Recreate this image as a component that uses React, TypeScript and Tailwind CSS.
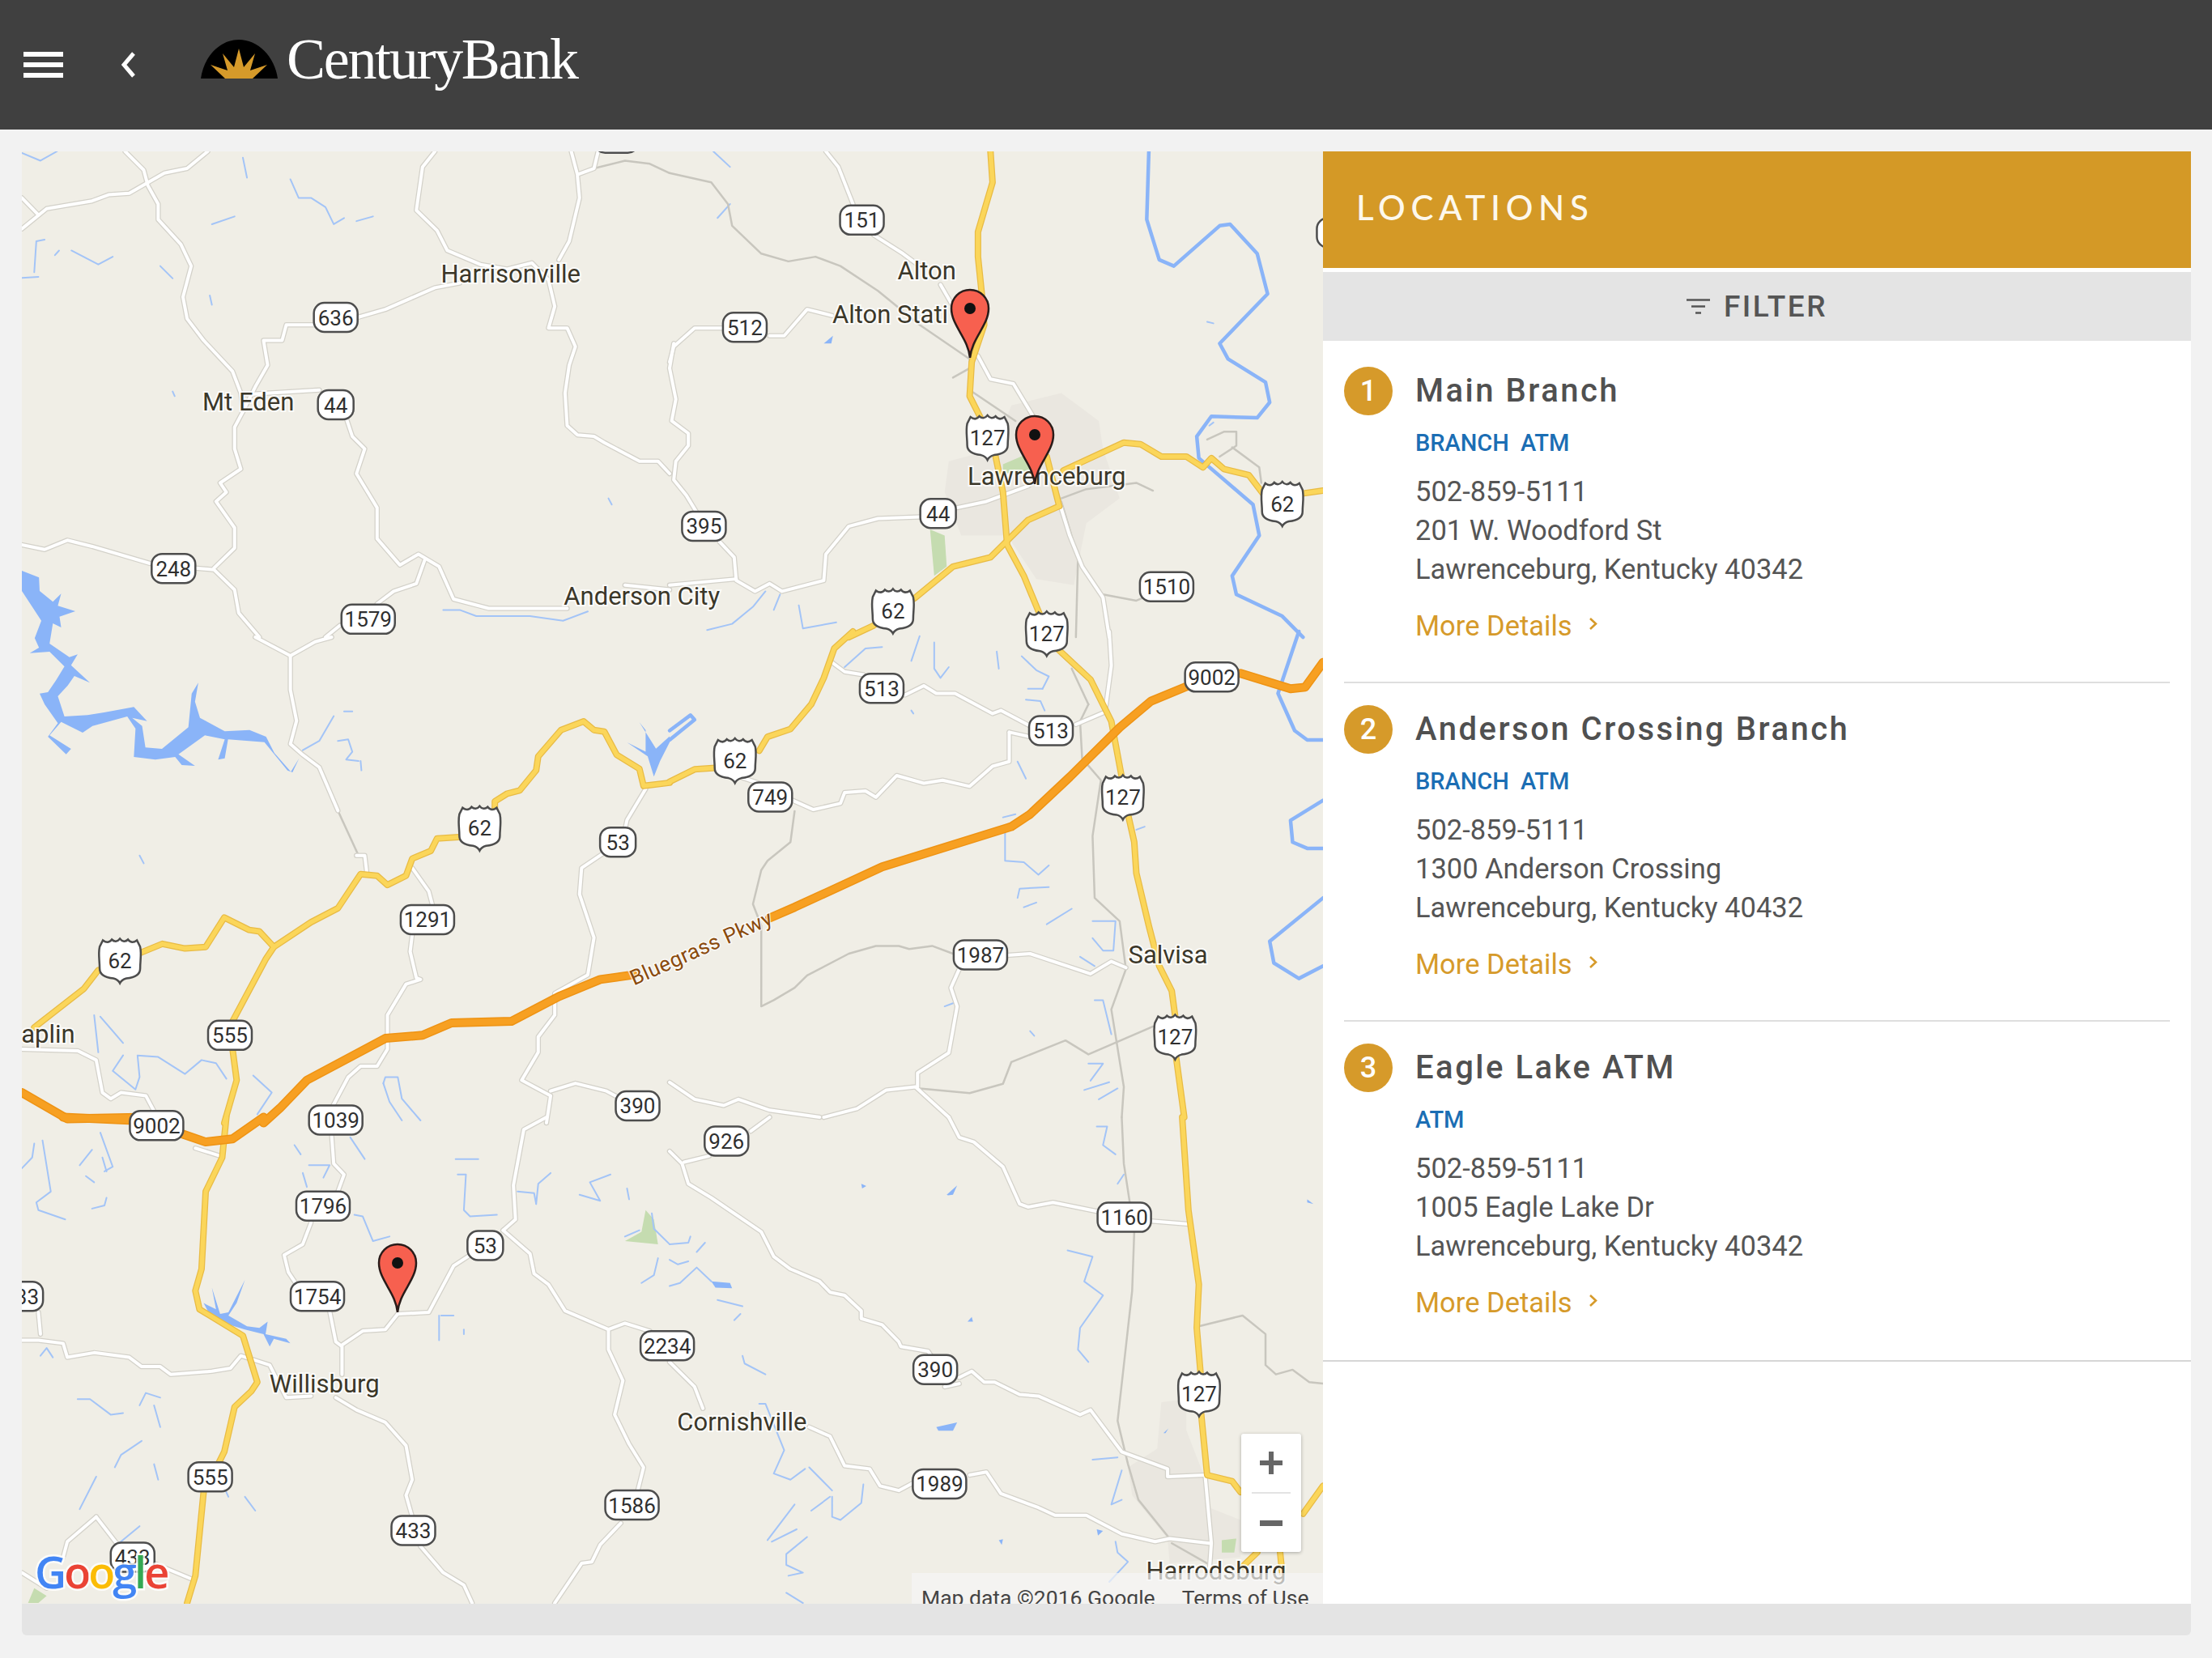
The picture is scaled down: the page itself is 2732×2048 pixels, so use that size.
type Tile = {
    at: string
    town?: string[]
    park?: string[]
    lake?: string[]
    water?: string[]
    river?: string[]
    thin?: string[]
    white?: string[]
    yellow?: string[]
    orange?: string[]
}

// road and water traces, each tile in its own source coordinates
const tiles: Tile[] = [
    {
        at: 'translate(0 680) scale(.4082 .3333)',
        lake: [
            '66,75 118,100 120,150 160,190 185,160 175,205 228,225 180,245 185,285 160,270 150,345 210,395 235,385 215,425 272,490 225,465 205,500 175,540 195,615 265,610 315,600 405,580 445,632 400,620 430,650 440,730 490,735 570,655 580,530 600,490 590,560 605,620 680,670 755,665 805,690 830,750 880,820 905,770 885,822 870,815 800,710 690,700 680,770 660,775 680,700 620,685 540,755 590,798 550,795 530,765 470,775 405,765 410,660 385,615 280,650 250,675 185,635 150,685 215,735 200,755 145,690 175,640 135,570 120,530 145,525 170,480 195,430 150,375 90,380 118,360 105,325 125,260 66,150',
        ],
    },
    {
        at: 'translate(27 187) scale(.5102 .3827)',
        water: [
            '535,20 545,85', '650,90 670,150 700,150 735,180 755,235 780,215', '810,225 850,210', '460,235 515,210',
            '0,5 45,30 85,0', '30,390 35,290 55,285', '80,335 90,320', '120,320 185,365 220,340', '335,370 365,410',
            '455,465 460,495', '0,408 40,405', '365,775 370,790', '1420,1120 1428,1140',
            '1020,1480 1060,1480 1100,1500 1230,1500 1310,1515 1370,1485',
        ],
        thin: ['1385,55 1460,30 1520,40 1568,70'],
        white: [
            '250,0 295,60 305,110 330,170 330,220 385,300 410,370 390,470 400,540 440,610 510,710 530,780 535,840 515,890 515,960 530,1025 480,1070 495,1100 470,1130 515,1215 515,1280 465,1345',
            '0,250 60,185 170,160 210,140 260,135 345,70 400,55 450,0',
            '0,150 40,205',
            '1000,0 970,50 955,190 1005,255 1030,320 1110,365 1175,380 1235,360 1275,415 1290,500 1275,570 1320,570 1340,630 1325,690 1315,780 1320,885 1345,915 1385,920 1410,940 1495,1000 1540,1000 1568,1040',
            '1345,80 1350,150 1325,290 1300,350',
            '1330,0 1345,75 1385,55 1395,0',
            '1060,425 1000,440 880,510 815,535',
            '720,560 640,560 630,610 585,610 595,690 565,760 535,840',
            '535,785 720,770',
            '785,860 800,920 830,960 810,1040 860,1150 860,1250 915,1335 960,1300 1010,1340 1045,1445 1130,1475 1320,1475',
            '1460,1400 1568,1415',
            '975,1320 955,1395 900,1420 860,1460',
            '0,1270 55,1285 110,1255 170,1275 310,1330',
            '420,1345 465,1350 515,1415 525,1490 575,1568',
            '770,1530 735,1568',
        ],
    },
    {
        at: 'translate(827 187) scale(.5147 .3827)',
        town: ['670,1000 780,960 820,820 940,780 1030,870 1040,960 1080,1120 1000,1200 970,1400 880,1380 810,1240 700,1240 660,1100'],
        park: ['800,1010 860,975 870,1030 800,1040', '625,1220 660,1240 665,1340 635,1370'],
        lake: ['370,620 392,595 388,620'],
        river: ['1150,0 1145,220 1175,350 1210,370 1320,240 1345,235 1410,330 1435,460 1320,620 1340,670 1430,745 1440,810 1410,860 1300,855 1265,920 1270,990 1400,1140 1415,1240 1350,1370 1360,1430 1470,1500 1520,1568'],
        water: ['105,0 145,50', '145,170 115,215', '1290,550 1305,555', '1295,885 1305,875', '250,1480 265,1430', '90,1545 150,1525 200,1470 230,1420', '310,1465 320,1540 400,1520'],
        thin: [
            '0,70 100,100 140,170 150,240 220,330 285,355 350,340 410,370 500,450 600,560 720,670 720,770 830,870',
            '720,700 680,730', '940,1120 1000,1090 1120,1070 1160,1095', '940,1130 980,1310 975,1568', '1040,1430 1120,1450 1190,1410',
            '1290,930 1330,905 1360,905 1360,950 1320,985', '1350,955 1415,1020 1420,1070',
        ],
        white: [
            '375,0 405,50 440,170', '490,270 560,330 600,370', '650,430 680,500',
            '0,680 10,630 60,570 130,570', '240,595 275,595 330,510 390,530',
            '10,620 0,700 15,800 5,870 45,910 45,950 15,1000 10,1060 40,1110 65,1165',
            '120,1260 155,1310 160,1385 205,1420 240,1395 270,1420 370,1385 375,1300 430,1210 500,1185 600,1180',
            '160,1380 0,1400', '690,1150 760,1130 860,1080 880,1060', '740,660 770,735 825,750 870,850',
            '900,980 960,1240 990,1340 1040,1440 1055,1568',
        ],
        yellow: [
            '770,0 775,100 740,260 740,340 750,470 755,560 725,680 720,790 750,870',
            '780,970 800,1100 810,1270 850,1370 890,1500', '905,985 935,1145',
            '430,1568 490,1530 590,1440 680,1340 770,1310 860,1190 935,1145',
            '945,1030 1090,940 1130,945 1180,985 1240,985 1280,1020 1300,990 1330,1025 1390,1045 1430,1115',
            '1515,1105 1568,1095',
        ],
    },
    {
        at: 'translate(27 787) scale(.5102 .3827)',
        lake: ['1495,275 1510,300 1510,370 1465,340 1515,385 1530,450 1545,400 1568,340 1568,320 1535,360'],
        water: [
            '755,255 720,335 680,365', '780,240 800,240', '765,335 790,330 800,370 785,395 815,400', '820,400 822,430', '285,705 295,730',
            '175,1220 185,1340', '190,1225 245,1310', '245,1350 220,1400 275,1460 285,1420 280,1350 330,1355 395,1410 435,1365 470,1375 495,1425',
            '560,1415 605,1470 570,1540', '875,1440 880,1420 910,1420 920,1490 965,1560', '875,1440 890,1500 920,1560',
        ],
        thin: ['765,560 815,705'],
        white: [
            '565,0 650,60 710,15 750,0', '650,60 650,170 665,270 650,345 680,380 720,420 765,560', '810,705 830,705 835,760',
            '945,745 985,820 995,870',
            '945,960 940,1015 955,1100 965,1105 930,1120 885,1220 885,1330 860,1385 820,1385 790,1420 750,1520',
            '1510,490 1465,590 1460,620',
            '1405,700 1355,745 1350,830 1385,970 1370,1090 1290,1150 1290,1220 1250,1290 1250,1340 1210,1430 1280,1480 1270,1568',
            '1280,1465 1340,1440 1415,1465 1450,1490',
            '0,1330 135,1335 180,1365 195,1470 215,1490 240,1470 300,1480 320,1530',
        ],
        yellow: [
            '1145,555 1145,530 1175,505 1205,495 1245,430 1250,385 1305,300 1360,272 1385,300 1410,305 1440,380 1495,425 1505,480 1568,470',
            '1065,645 1005,650 990,690 945,715 930,770 885,800 860,770 820,765 765,875 700,920 610,1000 590,1040 510,1240',
            '610,1000 575,950 550,945 490,905 445,1000 395,1005 340,990 285,1020',
            '185,1075 150,1135 30,1260', '510,1330 520,1430 490,1568',
        ],
        orange: [
            '0,1470 110,1555 280,1550',
            '585,1568 625,1520 690,1430 880,1295 970,1285 1040,1245 1185,1240 1300,1160 1400,1105 1480,1090',
        ],
    },
    {
        at: 'translate(827 780) scale(.5147 .3827)',
        river: [
            '1510,0 1460,200 1500,320 1530,350 1568,350', '1568,545 1490,610 1495,680 1530,700 1568,700',
            '1568,860 1440,1000 1450,1070 1510,1120 1568,1080', '0,350 60,285 50,270 0,320',
        ],
        water: [
            '800,600 830,590', '805,640 805,740 850,745 885,785 910,755', '835,860 840,830 910,825', '850,890 880,875', '905,945 965,895',
            '1015,935 1070,935 1065,1030 1040,1030 1015,990', '985,1050 1020,1080', '1020,1190 1040,1190 1060,1300',
            '1005,1395 1040,1395 1010,1450', '995,1480 1055,1455', '1030,1510 1075,1475', '865,1290 875,1305', '660,1210 680,1200',
            '785,65 790,120', '845,80 880,125 910,145 895,185', '860,185 895,185', '855,220 890,225 900,255', '835,420 855,475',
            '1120,640 1140,630', '420,115 470,55 510,50', '580,95 600,15', '635,35 635,120 650,150 670,115', '580,255 585,265',
        ],
        thin: [
            '300,580 290,680 235,740 220,770 200,880 220,950 220,1210 250,1190 300,1150 330,1110 430,1040 495,1015 550,1015 575,1025 630,1015 680,1040',
            '1005,235 985,290 990,410 1035,480 1015,660 1020,860 1080,935 1095,1090 1060,1220 1090,1470 1085,1568',
            '965,120 1005,235', '600,1475 720,1490 800,1460 820,1390 950,1320 1005,1365 1160,1275',
        ],
        white: [
            '385,95 420,130 465,140', '565,205 610,175 640,200 685,200 775,265 795,255 865,305', '975,300 1045,260 1060,110 1055,0',
            '815,325 865,340', '815,325 815,420 775,435 720,500 655,480 610,490 545,465 495,535 470,515 420,520 410,555 345,575 295,545',
            '170,470 215,490', '810,1045 865,1040 1010,1105 1060,1065 1095,1085', '695,1090 675,1150 690,1210 670,1360 595,1425 595,1470',
            '0,1455 60,1510 130,1530 165,1510 240,1545 360,1568', '370,1568 450,1540 520,1480 590,1470 670,1568',
        ],
        yellow: [
            '440,0 395,55 370,150 340,235 290,315 235,340 215,385', '110,440 60,445 0,485', '930,55 1010,155 1060,290 1085,470',
            '1100,590 1115,680 1120,780 1150,950 1175,1080 1205,1160 1215,1260', '1215,1370 1235,1568',
        ],
        orange: ['1245,175 1155,225 1080,310 960,470 865,590 820,630 510,760 300,890 240,925', '1370,135 1490,185 1525,180 1568,100'],
    },
    {
        at: 'translate(27 1380) scale(.5102 .3827)',
        park: ['1460,400 1500,370 1510,300 1530,330 1540,410 1500,405', '30,1520 60,1545 40,1568 15,1568'],
        lake: ['440,600 470,620 460,550 480,635 500,630 540,525 520,600 500,640 545,675 575,680 595,660 590,700 640,715 650,730 610,715 600,740 585,700 540,685 490,665 450,625'],
        water: [
            '50,75 70,240 35,275 40,300 105,330', '0,165 25,130 30,85', '190,50 220,160 200,175', '195,130 205,175', '140,155 170,105',
            '155,190 175,210', '170,295 200,285 205,260', '660,90 675,120', '695,155 745,155 730,195', '680,180 690,225', '795,65 830,135',
            '805,315 825,320 850,400 890,385', '1050,135 1105,135', '1055,185 1075,185 1070,300 1085,320 1150,315', '1200,240 1240,245 1245,280',
            '1245,280 1250,215 1280,180', '1350,250 1400,270 1375,210 1425,185', '1465,230 1470,265', '1525,310 1530,360 1568,410',
            '1460,385 1495,365', '1500,535 1530,510 1540,455', '1015,640 1045,640', '1010,640 1010,720', '1070,685 1070,700',
            '45,770 60,745 75,775', '135,910 165,910 215,960 245,955', '285,930 300,890 335,905', '320,930 335,1000',
            '225,1130 240,1090 290,1045', '320,1120 330,1170', '140,1265 180,1160', '495,1210 500,1225', '540,1225 565,1270', '235,1375 285,1320',
        ],
        white: [
            '750,60 755,150 780,185 765,240', '700,340 680,410 635,445 645,500 665,540', '745,625 760,725 775,740 775,830',
            '775,735 825,690 880,685 910,635 985,630 1045,480 1085,445', '1165,365 1195,330 1190,220 1215,40 1270,0',
            '1165,365 1230,440 1240,505 1275,540 1315,625 1420,685 1460,665 1520,690',
            '1420,685 1420,750 1455,850 1435,960 1470,1055 1505,1130 1490,1210',
            '760,905 810,945 880,985 930,1060 945,1170 930,1220 945,1290', '965,1385 1020,1470 1070,1510 1090,1568',
            '1450,1310 1400,1380 1380,1435 1355,1440 1290,1568',
            '0,720 40,720 100,730 110,775 175,760 260,775 290,805 335,805 360,830 460,820 505,810 530,770 600,800 640,905 700,900',
            '40,630 45,700', '180,1290 110,1370 100,1420', '180,1290 235,1385', '0,1470 60,1520', '320,1440 410,1490', '420,100 480,125',
        ],
        yellow: [
            '495,0 485,130 445,240 435,490 420,560 430,620 535,705 570,855 555,885 515,935 490,1080 475,1120',
            '440,1210 420,1480 400,1568',
        ],
        orange: ['100,0 260,10', '390,55 445,80 510,70 585,0'],
    },
    {
        at: 'translate(827 1380) scale(.5147 .3827)',
        town: ['1180,920 1240,910 1240,1010 1280,1150 1295,1260 1370,1300 1370,1420 1200,1440 1195,1360 1110,1220 1100,1130 1170,1070'],
        park: ['1325,1365 1360,1360 1355,1405 1325,1405'],
        lake: [
            '640,1000 690,985 680,1012 645,1012', '665,250 690,220 680,250 668,252', '460,215 472,222 462,230', '100,530 145,535 150,552 110,550',
            '1025,1330 1040,1335 1028,1350', '715,660 725,645 728,660', '1190,1020 1197,1005 1185,1020', '1530,265 1545,280 1530,275', '790,1365 800,1362 797,1380',
        ],
        water: [
            '1025,30 1050,30 1040,90 1070,120', '1090,185 1075,215', '955,430 1015,450 995,530 1040,575 985,680 980,750 1005,790',
            '0,410 45,405 50,385', '65,435 85,405', '0,460 20,475 45,465', '0,545 25,535 65,485 100,530', '115,590 175,610', '155,655 170,635',
            '175,770 180,795 230,830', '215,925 230,925 275,1075 250,1150 290,1170 325,1135', '335,1130 390,1205',
            '390,1225 390,1290 410,1300 460,1245 465,1185', '340,1270 385,1225', '300,1250 235,1365', '245,1370 305,1330',
            '330,1355 280,1410 280,1445 320,1470 285,1480', '280,1535 320,1568', '1015,1105 1075,1098', '1085,1140 1060,1250 1085,1235',
            '1070,1370 1075,1405 1100,1435 1055,1500',
        ],
        thin: [
            '1085,0 1090,150 1115,370 1110,560 1075,980 1100,1120 1125,1235 1200,1360', '1205,1375 1290,1440',
            '1270,675 1375,640 1430,700 1430,800 1455,830 1495,815 1535,855 1568,860',
        ],
        white: [
            '0,110 30,150 45,215 100,260 220,370 250,450 290,490 360,530 385,565 420,575 460,625 460,650 510,670 550,725 555,740 620,755 630,775',
            '35,145 95,125', '195,45 240,0', '670,0 695,65 730,80 800,160 840,280 860,290 920,275 1030,305', '1155,335 1245,345',
            '695,840 725,820 755,855 780,855 840,895 885,900 985,960 1010,945 1085,1080 1195,1135 1195,1160 1285,1155', '660,870 695,860',
            '0,790 60,870 80,940', '335,1000 385,1030 420,1125 480,1135 505,1190 550,1205 585,1180',
            '720,1155 760,1145 795,1215 885,1260 925,1285 1000,1285 1085,1345 1165,1370 1200,1360 1295,1375',
            '1285,1155 1300,1375 1295,1470',
        ],
        yellow: [
            '1230,0 1245,300 1270,540 1265,680 1275,840', '1275,950 1290,1155 1350,1175 1370,1210', '1520,1280 1568,1190',
            '1375,1450 1410,1405', '1465,1405 1470,1470',
        ],
    },
]

const S = 1.7423

// centre points as read off the screenshot at 1568 wide
const stateRoutes: [string, number, number][] = [
    ['', 437, 98], ['', 949, 165], ['151', 611, 156], ['636', 238, 225], ['512', 528, 232], ['44', 238, 287], ['395', 499, 373],
    ['44', 665, 364], ['248', 123, 403], ['1579', 261, 439], ['1510', 827, 416], ['513', 625, 488], ['513', 745, 518],
    ['9002', 859, 480], ['749', 546, 565], ['53', 438, 597], ['1291', 303, 652], ['1987', 695, 677], ['555', 163, 734],
    ['9002', 111, 798], ['1039', 238, 794], ['390', 452, 784], ['926', 515, 809], ['1796', 229, 855], ['1160', 797, 863],
    ['53', 344, 883], ['1754', 225, 919], ['433', 15, 919], ['2234', 473, 954], ['390', 663, 971], ['555', 149, 1047],
    ['1989', 666, 1052], ['1586', 448, 1067], ['433', 293, 1085], ['433', 94, 1104],
]

const usRoutes: [string, number, number][] = [
    ['127', 700, 310], ['62', 909, 357], ['62', 633, 433], ['127', 742, 449], ['62', 521, 539], ['127', 796, 565],
    ['62', 340, 587], ['62', 85, 681], ['127', 833, 735], ['127', 850, 988],
]

const places: [string, number, number, 'middle' | 'start'][] = [
    ['Harrisonville', 362, 194, 'middle'], ['Alton', 657, 192, 'middle'], ['Alton Stati', 590, 223, 'start'], ['Mt Eden', 176, 285, 'middle'],
    ['Lawrenceburg', 742, 338, 'middle'], ['Anderson City', 455, 423, 'middle'], ['Salvisa', 828, 677, 'middle'], ['aplin', 15, 733, 'start'],
    ['Willisburg', 230, 981, 'middle'], ['Cornishville', 526, 1008, 'middle'], ['Harrodsburg', 862, 1114, 'middle'],
]

const pins = [
    [1198, 442],
    [1278, 598],
    [491, 1621],
]

const locations = [
    { n: 1, name: 'Main Branch', tags: ['BRANCH', 'ATM'], street: '201 W. Woodford St', city: 'Lawrenceburg, Kentucky 40342' },
    { n: 2, name: 'Anderson Crossing Branch', tags: ['BRANCH', 'ATM'], street: '1300 Anderson Crossing', city: 'Lawrenceburg, Kentucky 40432' },
    { n: 3, name: 'Eagle Lake ATM', tags: ['ATM'], street: '1005 Eagle Lake Dr', city: 'Lawrenceburg, Kentucky 40342' },
]

function Lines({ k, stroke, width }: { k: 'water' | 'river' | 'thin' | 'white' | 'yellow' | 'orange'; stroke: string; width: number }) {
    return (
        <>
            {tiles.flatMap((t, i) =>
                (t[k] ?? []).map((p, j) => (
                    <polyline
                        key={`${i}-${j}`}
                        transform={t.at}
                        points={p}
                        fill="none"
                        stroke={stroke}
                        strokeWidth={width}
                        strokeLinejoin="round"
                        strokeLinecap="round"
                        vectorEffect="non-scaling-stroke"
                    />
                ))
            )}
        </>
    )
}

function Fills({ k, fill }: { k: 'town' | 'park' | 'lake'; fill: string }) {
    return (
        <>
            {tiles.flatMap((t, i) =>
                (t[k] ?? []).map((p, j) => <polygon key={`${i}-${j}`} transform={t.at} points={p} fill={fill} />)
            )}
        </>
    )
}

function MapDrawing() {
    return (
        <svg className="block h-full w-full" viewBox="27 187 1607 1794" fontFamily="Roboto, sans-serif">
            <rect x="27" y="187" width="1607" height="1794" fill="#f0eee6" />
            <Fills k="town" fill="#eae7e0" />
            <Fills k="park" fill="#c5dcb0" />
            <Fills k="lake" fill="#8ab4f8" />
            <Lines k="water" stroke="#a3c4f7" width={2} />
            <Lines k="river" stroke="#8ab4f8" width={4.5} />
            <Lines k="thin" stroke="#c8c6be" width={2.5} />
            <Lines k="white" stroke="#d3d1c9" width={6.5} />
            <Lines k="white" stroke="#ffffff" width={4} />
            <Lines k="yellow" stroke="#e8bb45" width={8} />
            <Lines k="yellow" stroke="#fbd65a" width={5.5} />
            <Lines k="orange" stroke="#ee9314" width={11} />
            <Lines k="orange" stroke="#f7a022" width={8} />

            {stateRoutes.map(([label, x, y], i) => {
                const w = label.length >= 4 ? 66 : label.length === 3 || label === '' ? 54 : 44
                return (
                    <g key={i} transform={`translate(${x * S} ${y * S})`}>
                        <rect x={-w / 2} y={-18} width={w} height={36} rx={13} fill="#fff" stroke="#4d4d4d" strokeWidth={2.5} />
                        <text textAnchor="middle" y={9.5} fontSize={26} fill="#2f2f2f">{label}</text>
                    </g>
                )
            })}
            {usRoutes.map(([label, x, y], i) => (
                <g key={i} transform={`translate(${x * S} ${y * S})`}>
                    <path
                        d="M-21,-25 C-17,-22 -13,-22 -10,-26 C-7,-23 -3,-23 0,-27 C3,-23 7,-23 10,-26 C13,-22 17,-22 21,-25 L25,-17 C27,-8 25,0 25,10 C25,18 18,21 8,22 C4,23 2,24 0,28 C-2,24 -4,23 -8,22 C-18,21 -25,18 -25,10 C-25,0 -27,-8 -25,-17 Z"
                        fill="#fff"
                        stroke="#4d4d4d"
                        strokeWidth={2.5}
                    />
                    <text textAnchor="middle" y={9.5} fontSize={26} fill="#2f2f2f">{label}</text>
                </g>
            ))}

            <text
                transform={`translate(${497 * S} ${672 * S}) rotate(-24)`}
                textAnchor="middle"
                y={9}
                fontSize={26}
                fill="#8a4a0c"
                stroke="#ffffff"
                strokeOpacity={0.7}
                strokeWidth={3}
                paintOrder="stroke"
                letterSpacing={0.5}
            >
                Bluegrass Pkwy
            </text>

            {places.map(([label, x, y, anchor]) => (
                <text
                    key={label}
                    x={x * S}
                    y={y * S + 10.5}
                    textAnchor={anchor}
                    fontSize={31}
                    fill="#3b3729"
                    stroke="#ffffff"
                    strokeOpacity={0.8}
                    strokeWidth={4}
                    paintOrder="stroke"
                >
                    {label}
                </text>
            ))}

            {pins.map(([x, y]) => (
                <g key={x} transform={`translate(${x} ${y})`}>
                    <path
                        d="M0,0 C-2,-24 -23,-40 -23,-61 A23,23 0 1 1 23,-61 C23,-40 2,-24 0,0 Z"
                        fill="#f7604f"
                        stroke="#2a1c1a"
                        strokeWidth={2.5}
                    />
                    <circle cy={-61} r={7} fill="#111" />
                </g>
            ))}

            <text x={43} y={1962} fontSize={54} fontWeight={600} fontFamily="Open Sans, sans-serif" stroke="#ffffff" strokeOpacity={0.8} strokeWidth={5} paintOrder="stroke" letterSpacing={-3}>
                <tspan fill="#4285f4">G</tspan>
                <tspan fill="#ea4335">o</tspan>
                <tspan fill="#fbbc05">o</tspan>
                <tspan fill="#4285f4">g</tspan>
                <tspan fill="#34a853">l</tspan>
                <tspan fill="#ea4335">e</tspan>
            </text>
        </svg>
    )
}

function Logo() {
    return (
        <div className="flex items-end gap-[11px]">
            <svg width="95" height="48" viewBox="0 0 95 48">
                <path d="M0,48 C4,20 24,0 47,0 C70,0 91,20 95,48 Z" fill="#000" />
                <polygon points="30,48 12,31 33,38 27,17 41,34 47,11 53,34 67,17 61,38 82,31 64,48" fill="#d69a2a" />
            </svg>
            <span className="font-['Liberation_Serif',serif] text-[72px] leading-[48px] tracking-[-2.3px] text-white">CenturyBank</span>
        </div>
    )
}

function LocationItem({ location, last }: { location: (typeof locations)[number]; last: boolean }) {
    return (
        <div className={`mx-[26px] flex h-[418px] gap-[28px] pt-[27px] ${last ? '' : 'border-b-2 border-[#dedede]'}`}>
            <div className="flex h-[60px] w-[60px] shrink-0 items-center justify-center rounded-full bg-[#d69a2a] text-[36px] font-medium text-white">
                {location.n}
            </div>
            <div className="min-w-0">
                <p className="text-[40px] font-medium leading-[60px] tracking-[2.5px] text-[#505050]">{location.name}</p>
                <div className="mt-[14px] flex gap-[14px] text-[29px] font-medium leading-[40px] text-[#1b6eb4]">
                    {location.tags.map((tag) => (
                        <span key={tag}>{tag}</span>
                    ))}
                </div>
                <div className="mt-[16px] text-[34.5px] leading-[48px] text-[#555555]">
                    <p>502-859-5111</p>
                    <p>{location.street}</p>
                    <p>{location.city}</p>
                </div>
                <div className="mt-[22px] flex items-center gap-[20px] text-[34.5px] leading-[48px] text-[#d69a2a]">
                    More Details
                    <svg className="-mt-[6px]" width="11" height="17" viewBox="0 0 11 17">
                        <polyline points="2,2 9,8.5 2,15" fill="none" stroke="#d69a2a" strokeWidth="2.6" />
                    </svg>
                </div>
            </div>
        </div>
    )
}

export default function App() {
    return (
        <div className="min-h-screen bg-[#f2f2f2] font-['Roboto',sans-serif]">
            <header className="flex h-[160px] items-center bg-[#404040] pl-[29px]">
                <div className="flex w-[49px] flex-col gap-[7px]">
                    <span className="h-[6px] bg-white" />
                    <span className="h-[6px] bg-white" />
                    <span className="h-[6px] bg-white" />
                </div>
                <svg className="ml-[72px]" width="18" height="32" viewBox="0 0 18 32">
                    <polyline points="15,2 3,16 15,30" fill="none" stroke="#fff" strokeWidth="5" />
                </svg>
                <div className="mb-[14px] ml-[80px]">
                    <Logo />
                </div>
            </header>

            <main className="px-[26px] pl-[27px] pt-[27px]">
                <div className="flex h-[1794px]">
                    <div className="relative w-[1607px] shrink-0 overflow-hidden">
                        <MapDrawing />
                        <div className="absolute left-[1506px] top-[1584px] flex h-[146px] w-[74px] flex-col items-center rounded-[3px] bg-white shadow-[0_1px_4px_rgba(0,0,0,0.3)]">
                            <div className="flex h-[72px] items-center justify-center">
                                <svg width="28" height="28" viewBox="0 0 28 28">
                                    <path d="M11,0 h6 v11 h11 v6 h-11 v11 h-6 v-11 h-11 v-6 h11 Z" fill="#666" />
                                </svg>
                            </div>
                            <div className="h-[2px] w-[48px] bg-[#e3e3e3]" />
                            <div className="flex flex-1 items-center justify-center">
                                <div className="h-[7px] w-[28px] bg-[#666]" />
                            </div>
                        </div>
                        <div className="absolute bottom-0 right-0 flex h-[38px] w-[508px] gap-[33px] whitespace-nowrap bg-[#f5f5f5]/70 pl-[12px] pt-[16px] text-[26.5px] leading-[30px] text-[#444]">
                            <span>Map data ©2016 Google</span>
                            <span>Terms of Use</span>
                        </div>
                    </div>

                    <aside className="w-[1072px] shrink-0 bg-white">
                        <div className="flex h-[144px] items-center bg-[#d49926] pb-[6px] pl-[41px]">
                            <h1 className="font-['Lato',sans-serif] text-[42px] font-medium tracking-[6.7px] text-[#fdf8ec]">LOCATIONS</h1>
                        </div>
                        <div className="mt-[5px] flex h-[85px] items-center justify-center gap-[17px] bg-[#e4e4e4] text-[#555]">
                            <svg width="29" height="20" viewBox="0 0 29 20">
                                <path d="M0,1.5 H29 M6,9.5 H23 M11,17.5 H18" stroke="#555" strokeWidth="2.6" fill="none" />
                            </svg>
                            <span className="text-[37px] font-medium tracking-[2.5px]">FILTER</span>
                        </div>
                        <div className="border-b-2 border-[#d6d6d6] pt-[5px]">
                            {locations.map((location, i) => (
                                <LocationItem key={location.n} location={location} last={i === locations.length - 1} />
                            ))}
                        </div>
                    </aside>
                </div>
                <div className="h-[39px] rounded-b-[6px] bg-[#e4e4e4]" />
            </main>
        </div>
    )
}
